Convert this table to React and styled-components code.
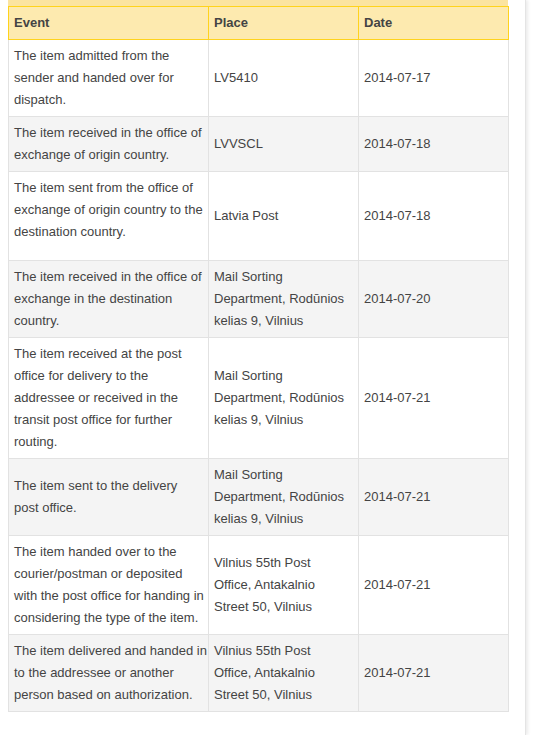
import styled, { createGlobalStyle } from "styled-components";

const GlobalStyle = createGlobalStyle`
  html, body {
    margin: 0;
    padding: 0;
    background: #fff;
  }
  body {
    font-family: Arial, "Liberation Sans", sans-serif;
    font-size: 13px;
    color: #444;
  }
`;

const Page = styled.div`
  width: 526px;
  min-height: 100vh;
  box-sizing: border-box;
  border-right: 1px solid #e4e4e4;
  box-shadow: 2px 0 3px rgba(0, 0, 0, 0.08);
  padding: 0 8px;
`;

const Content = styled.div`
  width: 500px;
`;

const TopStrip = styled.div`
  height: 6px;
  background: #fbe4a0;
`;

const Table = styled.table`
  width: 500px;
  table-layout: fixed;
  border-collapse: collapse;
  line-height: 22px;
`;

const HeadCell = styled.th`
  background: #fdeaaf;
  border: 1px solid #ffd31c;
  padding: 5px 5px;
  text-align: left;
  font-weight: bold;
  color: #444;
`;

const Row = styled.tr`
  background: ${(p) => (p.$alt ? "#f4f4f4" : "#fff")};
`;

const Cell = styled.td`
  border: 1px solid #e2e2e2;
  padding: 5px 5px ${(p) => (p.$extra ? "17px" : "5px")};
  vertical-align: middle;
  color: #444;
  overflow: visible;
`;

const Line = styled.span`
  display: block;
  white-space: nowrap;
`;

const sorting = ["Mail Sorting", "Department, Rodūnios", "kelias 9, Vilnius"];
const vilnius55 = ["Vilnius 55th Post", "Office, Antakalnio", "Street 50, Vilnius"];

const events = [
  {
    event: ["The item admitted from the", "sender and handed over for", "dispatch."],
    place: ["LV5410"],
    date: "2014-07-17",
  },
  {
    event: ["The item received in the office of", "exchange of origin country."],
    place: ["LVVSCL"],
    date: "2014-07-18",
  },
  {
    event: ["The item sent from the office of", "exchange of origin country to the", "destination country."],
    place: ["Latvia Post"],
    date: "2014-07-18",
    extra: true,
  },
  {
    event: ["The item received in the office of", "exchange in the destination", "country."],
    place: sorting,
    date: "2014-07-20",
  },
  {
    event: [
      "The item received at the post",
      "office for delivery to the",
      "addressee or received in the",
      "transit post office for further",
      "routing.",
    ],
    place: sorting,
    date: "2014-07-21",
  },
  {
    event: ["The item sent to the delivery", "post office."],
    place: sorting,
    date: "2014-07-21",
  },
  {
    event: [
      "The item handed over to the",
      "courier/postman or deposited",
      "with the post office for handing in",
      "considering the type of the item.",
    ],
    place: vilnius55,
    date: "2014-07-21",
  },
  {
    event: ["The item delivered and handed in", "to the addressee or another", "person based on authorization."],
    place: vilnius55,
    date: "2014-07-21",
  },
];

export default function App() {
  return (
    <>
      <GlobalStyle />
      <Page>
        <Content>
          <TopStrip />
          <Table>
            <colgroup>
              <col style={{ width: 200 }} />
              <col style={{ width: 150 }} />
              <col style={{ width: 150 }} />
            </colgroup>
            <thead>
              <tr>
                <HeadCell>Event</HeadCell>
                <HeadCell>Place</HeadCell>
                <HeadCell>Date</HeadCell>
              </tr>
            </thead>
            <tbody>
              {events.map((e, i) => (
                <Row key={i} $alt={i % 2 === 1}>
                  <Cell $extra={e.extra}>
                    {e.event.map((l) => (
                      <Line key={l}>{l}</Line>
                    ))}
                  </Cell>
                  <Cell>
                    {e.place.map((l) => (
                      <Line key={l}>{l}</Line>
                    ))}
                  </Cell>
                  <Cell>{e.date}</Cell>
                </Row>
              ))}
            </tbody>
          </Table>
        </Content>
      </Page>
    </>
  );
}
